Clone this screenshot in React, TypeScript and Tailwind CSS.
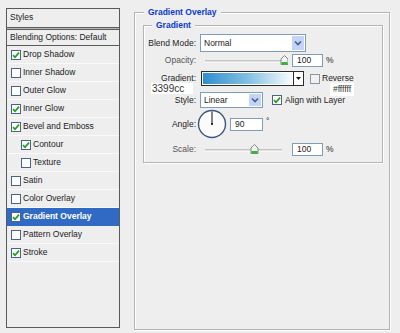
import React from "react";

const FONT = { fontFamily: '"Liberation Sans", Arial, sans-serif' };

const Check = ({ checked, gray = false }: { checked: boolean; gray?: boolean }) => (
  <span
    className={`flex h-[10px] w-[10px] shrink-0 items-center justify-center border ${
      gray ? "border-[#8a96a6] bg-[#f1f1f1]" : "border-[#4b6283] bg-white"
    }`}
  >
    {checked && (
      <svg width="8" height="8" viewBox="0 0 8 8">
        <path d="M1 4.2 L3 6.3 L7 1.6" stroke="#1f9e1f" strokeWidth="1.7" fill="none" />
      </svg>
    )}
  </span>
);

const rows = [
  { label: "Drop Shadow", checked: true },
  { label: "Inner Shadow", checked: false },
  { label: "Outer Glow", checked: false },
  { label: "Inner Glow", checked: true },
  { label: "Bevel and Emboss", checked: true },
  { label: "Contour", checked: true, indent: true },
  { label: "Texture", checked: false, indent: true },
  { label: "Satin", checked: false },
  { label: "Color Overlay", checked: false },
  { label: "Gradient Overlay", checked: true, active: true },
  { label: "Pattern Overlay", checked: false },
  { label: "Stroke", checked: true },
];

const Chevron = () => (
  <svg width="8" height="6" viewBox="0 0 8 6">
    <path d="M1 1.5 L4 4.5 L7 1.5" stroke="#4a5f86" strokeWidth="1.6" fill="none" />
  </svg>
);

const Slider = ({ pos }: { pos: number }) => (
  <svg width="88" height="13" viewBox="0 0 88 13" className="block">
    <line x1="5" y1="7" x2="82" y2="7" stroke="#9a9a9a" strokeWidth="1" />
    <line x1="5" y1="8" x2="82" y2="8" stroke="#ffffff" strokeWidth="1" />
    <path
      d={`M${pos} 10.5 L${pos} 5 L${pos + 3.5} 1.5 L${pos + 7} 5 L${pos + 7} 10.5 Z`}
      fill="#f4f4f4"
      stroke="#7c8a7c"
      strokeWidth="1"
    />
    <rect x={pos + 0.5} y="8" width="6" height="2.5" fill="#37b437" />
  </svg>
);

const Label = ({ children, light = false }: { children: React.ReactNode; light?: boolean }) => (
  <div className={`w-[52px] shrink-0 text-right leading-none ${light ? "text-[#555555]" : "text-[#1c1c1c]"}`}>
    {children}
  </div>
);

export default function App() {
  return (
    <div
      className="flex h-[333px] w-[400px] items-start overflow-hidden bg-[#eeeeee] text-[8.5px] text-[#1c1c1c]"
      style={FONT}
    >
      {/* Left styles list */}
      <div className="ml-[6px] mt-[8px] flex h-[320px] w-[114px] flex-col border border-[#595959] bg-[#eeeeee]">
        <div className="flex h-[18px] items-center pl-[3px] pb-[1px]">Styles</div>
        <div className="h-[3px] border-y border-[#5b5b5b] bg-[#b9b9b9]" />
        <div className="flex h-[16px] items-center border-b border-[#5b5b5b] pl-[3px]">
          Blending Options: Default
        </div>
        {rows.map((r) => (
          <div
            key={r.label}
            className={`flex h-[18px] items-center gap-[2px] border-b ${
              r.active ? "border-[#316ac5] bg-[#316ac5] font-bold text-white" : "border-[#f9f9f9]"
            } ${r.indent ? "pl-[14px]" : "pl-[4px]"}`}
          >
            <Check checked={r.checked} />
            <span className="leading-none">{r.label}</span>
          </div>
        ))}
      </div>

      {/* Right group */}
      <div className="ml-[14px] mt-[12px] flex h-[318px] w-[256px] flex-col border border-[#b4b4b4] shadow-[1px_1px_0_#ffffff,inset_1px_1px_0_#ffffff]">
        <div className="-mt-[7px] ml-[9px] w-fit bg-[#eeeeee] px-[4px] text-[8.5px] font-bold leading-[12px] text-[#0a3ad0]">
          Gradient Overlay
        </div>

        <div className="relative ml-[8px] mt-[7px] flex w-[240px] flex-col border border-[#b4b4b4] pb-[6px] shadow-[1px_1px_0_#ffffff,inset_1px_1px_0_#ffffff]">
          <div className="-mt-[7px] ml-[8px] w-fit bg-[#eeeeee] px-[4px] font-bold leading-[12px] text-[#0a3ad0]">
            Gradient
          </div>

          {/* Blend mode */}
          <div className="mt-[3px] flex h-[18px] items-center">
            <Label>Blend Mode:</Label>
            <div className="ml-[4px] flex h-[18px] w-[106px] items-center border border-[#7f9db9] bg-white">
              <span className="flex-1 pl-[3px] leading-none">Normal</span>
              <span className="m-[1px] flex h-[14px] w-[12px] items-center justify-center bg-[#c4d4f8]">
                <Chevron />
              </span>
            </div>
          </div>

          {/* Opacity */}
          <div className="mt-[2px] flex h-[13px] items-center">
            <Label light>Opacity:</Label>
            <div className="ml-[4px]">
              <Slider pos={81} />
            </div>
            <div className="ml-[4px] flex h-[13px] w-[31px] items-center border border-[#7f9db9] bg-white pl-[4px] leading-none">
              100
            </div>
            <span className="ml-[3px] leading-none">%</span>
          </div>

          {/* Gradient */}
          <div className="mt-[4px] flex h-[15px] items-center">
            <Label>Gradient:</Label>
            <div className="ml-[5px] flex h-[15px] w-[103px] border border-[#2b2b2b] bg-white">
              <div className="flex-1 border border-white bg-linear-to-r from-[#2d8fcc] via-[#7fc0e3] to-[#f7fbfd]" />
              <div className="flex w-[10px] items-center justify-center border-l border-[#2b2b2b] bg-white">
                <svg width="5" height="3" viewBox="0 0 5 3">
                  <path d="M0 0 L5 0 L2.5 3 Z" fill="#111" />
                </svg>
              </div>
            </div>
            <div className="ml-[6px]">
              <Check checked={false} gray />
            </div>
            <span className="ml-[2px] leading-none">Reverse</span>
          </div>

          {/* Style */}
          <div className="mt-[6px] flex h-[16px] items-center">
            <Label>Style:</Label>
            <div className="ml-[4px] flex h-[16px] w-[63px] items-center border border-[#7f9db9] bg-white">
              <span className="flex-1 pl-[3px] leading-none">Linear</span>
              <span className="m-[1px] flex h-[12px] w-[12px] items-center justify-center bg-[#c4d4f8]">
                <Chevron />
              </span>
            </div>
            <div className="ml-[9px]">
              <Check checked />
            </div>
            <span className="ml-[3px] leading-none">Align with Layer</span>
          </div>

          {/* Angle */}
          <div className="mt-[2px] flex h-[28px] items-center">
            <Label>Angle:</Label>
            <svg width="30" height="30" viewBox="0 0 30 30" className="ml-[1px] shrink-0">
              <circle cx="15" cy="15" r="13.5" fill="#fbfbfb" stroke="#40567c" strokeWidth="1.4" />
              <line x1="15" y1="15" x2="15" y2="2.5" stroke="#111" strokeWidth="1" />
              <circle cx="15" cy="15" r="1.1" fill="#111" />
            </svg>
            <div className="ml-[3px] flex h-[13px] w-[33px] items-center border border-[#7f9db9] bg-white pl-[4px] leading-none">
              90
            </div>
            <span className="ml-[3px] self-start pt-[7px] leading-none">°</span>
          </div>

          {/* Scale */}
          <div className="mt-[5px] flex h-[13px] items-center">
            <Label light>Scale:</Label>
            <div className="ml-[4px]">
              <Slider pos={51} />
            </div>
            <div className="ml-[4px] flex h-[13px] w-[31px] items-center border border-[#7f9db9] bg-white pl-[4px] leading-none">
              100
            </div>
            <span className="ml-[3px] leading-none">%</span>
          </div>

          {/* overlay annotations */}
          <div className="absolute left-[7px] top-[57px] flex h-[11px] w-[42px] items-center bg-white pl-[1px] text-[10px] leading-none text-[#333]">
            3399cc
          </div>
          <div className="absolute left-[186px] top-[57px] flex h-[13px] w-[24px] items-center justify-center bg-white text-[8.5px] leading-none text-[#333]">
            #ffffff
          </div>
        </div>
      </div>
    </div>
  );
}
